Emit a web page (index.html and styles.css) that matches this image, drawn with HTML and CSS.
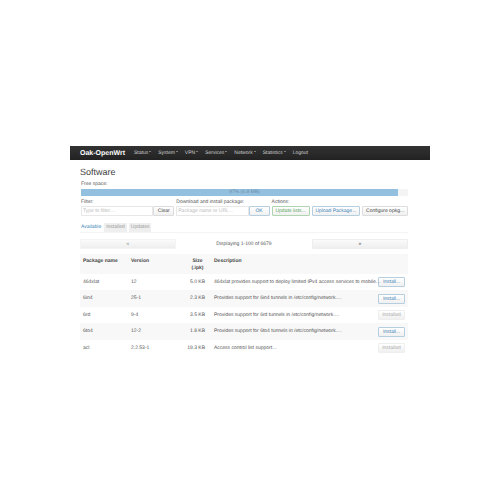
FILE: index.html
```html
<!DOCTYPE html>
<html lang="en">
<head>
<meta charset="utf-8">
<title>Oak-OpenWrt - Software</title>
<link rel="stylesheet" href="styles.css">
</head>
<body>
<div class="page">
  <header class="topbar">
    <a class="brand" href="#">Oak-OpenWrt</a>
    <nav class="menu">
      <a class="drop" href="#">Status</a>
      <a class="drop" href="#">System</a>
      <a class="drop" href="#">VPN</a>
      <a class="drop" href="#">Services</a>
      <a class="drop" href="#">Network</a>
      <a class="drop" href="#">Statistics</a>
      <a href="#">Logout</a>
    </nav>
  </header>
  <main class="content">
    <h1>Software</h1>
    <div class="label">Free space:</div>
    <div class="progress"><div class="fill"></div><span class="amount">97% (6.8 MB)</span></div>
    <div class="controls">
      <div class="filter">
        <label for="filter">Filter:</label>
        <div class="group"><input id="filter" type="text" placeholder="Type to filter…"><button type="button">Clear</button></div>
      </div>
      <div class="install">
        <label for="package">Download and install package:</label>
        <div class="group"><input id="package" type="text" placeholder="Package name or URL…"><button class="blue" type="button">OK</button></div>
      </div>
      <div class="actions">
        <div class="label">Actions:</div>
        <div class="buttons">
          <button class="green" type="button">Update lists...</button>
          <button class="blue" type="button">Upload Package...</button>
          <button type="button">Configure opkg...</button>
        </div>
      </div>
    </div>
    <div class="tabs">
      <a class="active" href="#">Available</a>
      <a href="#">Installed</a>
      <a href="#">Updates</a>
    </div>
    <div class="pager">
      <button class="off" type="button" aria-label="Previous page">«</button>
      <span>Displaying 1-100 of 6679</span>
      <button type="button" aria-label="Next page">»</button>
    </div>
    <table>
      <colgroup><col class="c-name"><col class="c-version"><col class="c-size"><col><col class="c-action"></colgroup>
      <thead>
        <tr><th>Package name</th><th>Version</th><th class="size">Size (.ipk)</th><th>Description</th><th></th></tr>
      </thead>
      <tbody>
        <tr><td>464xlat</td><td>12</td><td class="size">5.0 KB</td><td>464xlat provides support to deploy limited IPv4 access services to mobile…</td><td><button class="blue" type="button">Install...</button></td></tr>
        <tr><td>6in4</td><td>25-1</td><td class="size">2.3 KB</td><td>Provides support for 6in4 tunnels in /etc/config/network.…</td><td><button class="blue" type="button">Install...</button></td></tr>
        <tr><td>6rd</td><td>9-4</td><td class="size">3.5 KB</td><td>Provides support for 6rd tunnels in /etc/config/network.…</td><td><button type="button" disabled>Installed</button></td></tr>
        <tr><td>6to4</td><td>12-2</td><td class="size">1.8 KB</td><td>Provides support for 6to4 tunnels in /etc/config/network.…</td><td><button class="blue" type="button">Install...</button></td></tr>
        <tr><td>acl</td><td>2.2.53-1</td><td class="size">19.3 KB</td><td>Access control list support…</td><td><button type="button" disabled>Installed</button></td></tr>
      </tbody>
    </table>
  </main>
</div>
</body>
</html>
```
FILE: styles.css
```css
* { box-sizing: border-box; }
body {
  margin: 0;
  background: #fff;
  color: #555;
  font: 5px/7px "Liberation Sans", Arial, sans-serif;
  text-rendering: geometricPrecision;
}
.page { padding: 146px 14% 0; }
a { color: inherit; text-decoration: none; }
.topbar {
  display: flex;
  align-items: center;
  gap: 9px;
  height: 14px;
  padding: 0 10px;
  background: linear-gradient(#333, #222);
  color: #ccc;
}
.brand { color: #fff; font-size: 7px; font-weight: bold; }
.menu { display: flex; gap: 7px; }
.drop::after {
  content: "";
  display: inline-block;
  margin-left: 1px;
  border: 1px solid transparent;
  border-top-color: #ccc;
  vertical-align: middle;
}
.content { padding: 6px 22px 0 10px; }
h1 {
  margin: 0 0 2px;
  color: #404040;
  font: 9px/13px "Liberation Sans", Arial, sans-serif;
}
.label, label { display: block; height: 7px; white-space: nowrap; }
.content > .label { padding-left: 1px; }
.progress {
  position: relative;
  height: 7px;
  margin: 1px 0 3px 1px;
  background: #f4f4f4;
  text-align: center;
}
.fill { width: 97%; height: 7px; background: #93c0df; }
.amount { position: absolute; inset: 0; color: #6e8da5; }
.controls {
  display: grid;
  grid-template-columns: minmax(0, 93fr) minmax(0, 93fr) minmax(0, 136fr);
  gap: 2px;
  padding-left: 1px;
}
.group, .buttons { display: flex; }
.buttons { gap: 2px; }
.buttons button { flex: 1 1 auto; padding: 0 2px; }
button {
  height: 10px;
  padding: 0 4px;
  border: 1px solid #ddd;
  border-radius: 1px;
  background: linear-gradient(#fff, #f0f0f0);
  color: #444;
  font: inherit;
  line-height: 8px;
  white-space: nowrap;
  text-rendering: inherit;
}
input {
  flex: 1;
  min-width: 0;
  height: 10px;
  padding: 0 1px;
  border: 1px solid #e8e8e8;
  background: #fff;
  color: #555;
  font: inherit;
  text-rendering: inherit;
}
input::placeholder { color: #bbb; }
.group button { width: 21px; padding: 0; }
button.blue { border-color: #b5cfe1; color: #3c7fb4; }
button.green { border-color: #aed4b0; color: #59a35d; }
button:disabled { border-color: #eee; color: #aaa; }
.tabs {
  display: flex;
  gap: 2px;
  margin-top: 7px;
  border-bottom: 1px solid #f4f4f4;
}
.tabs a {
  padding: 0 2px;
  background: #efefef;
  color: #999;
  line-height: 9px;
}
.tabs .active { padding: 0 1px; background: #fff; color: #3c7fb4; }
.pager {
  display: grid;
  grid-template-columns: 96fr 136fr 96fr;
  align-items: center;
  margin: 6px 0 5px;
  text-align: center;
}
.pager button { border-color: #eee; background: linear-gradient(#fafafa, #eee); }
.pager .off { border-color: #f4f4f4; color: #888; }
table { width: 100%; border-collapse: collapse; table-layout: fixed; }
.c-name { width: 48px; }
.c-version { width: 56px; }
.c-size { width: 24px; }
.c-action { width: 34px; }
th, td { padding: 0 3px; text-align: left; white-space: nowrap; }
th { height: 20px; padding-top: 4px; vertical-align: top; color: #444; }
th.size { padding-left: 6px; text-align: center; white-space: normal; }
td.size { text-align: right; }
th:nth-child(4), td:nth-child(4) { padding-left: 6px; }
thead tr, tbody tr:nth-child(even) { background: #f8f8f8; }
td { height: 16px; }
tbody tr:nth-child(even) td { height: 17px; }
td button { display: block; width: 100%; padding: 0; }
td:last-child { padding-left: 4px; }
```
